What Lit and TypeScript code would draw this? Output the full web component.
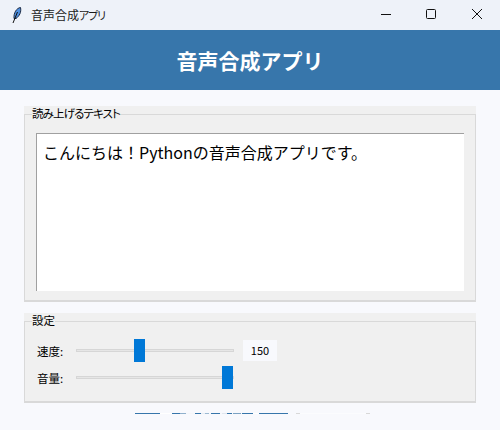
import { LitElement, html, css } from "lit";
import { customElement } from "lit/decorators.js";

@customElement("app-root")
export class AppRoot extends LitElement {
  static styles = css`
    :host {
      display: block;
      width: 500px;
      height: 430px;
      overflow: hidden;
      background: #f8f9fd;
      font-family: "Noto Sans CJK JP", "Noto Sans", sans-serif;
      color: #000;
    }
    .titlebar {
      height: 30px;
      background: #eef2f9;
      display: flex;
      align-items: center;
      padding-left: 8px;
    }
    .feather { width: 16px; height: 18px; margin-right: 7px; flex: none; }
    .title {
      flex: 1;
      color: #1a1a1a;
      font-size: 12px;
      line-height: 14px;
      padding-bottom: 1px;
      font-feature-settings: "palt";
    }
    .kana { font-size: 11px; letter-spacing: -1.2px; }
    .winbtn {
      width: 46px;
      height: 30px;
      box-sizing: border-box;
      padding-bottom: 2px;
      display: flex;
      align-items: center;
      justify-content: center;
    }
    .winbtn svg { width: 12px; height: 12px; }
    .header {
      height: 60px;
      background: #3776ab;
      color: #fff;
      font-size: 21px;
      font-weight: 700;
      display: flex;
      align-items: center;
      justify-content: center;
    }
    .content {
      padding: 16px 24px 0 24px;
      display: flex;
      flex-direction: column;
      gap: 11px;
    }
    .group {
      position: relative;
      background: #f0f0f0;
      height: 196px;
      box-sizing: border-box;
      padding: 27px 12px 0 12px;
    }
    .group.settings { height: 90px; padding: 26px 13px 0 13px; }
    .frame {
      position: absolute;
      inset: 8px 0 0 0;
      border: 1px solid #d9d9d9;
      border-width: 1px 1px 2px 1px;
      box-sizing: border-box;
    }
    .legend {
      position: absolute;
      left: 8px;
      top: 0;
      font-size: 11.5px;
      line-height: 15px;
      background: #f0f0f0;
      font-feature-settings: "palt";
    }
    .legend.tight { letter-spacing: -0.9px; }
    .textarea {
      position: relative;
      width: 428px;
      height: 158px;
      box-sizing: border-box;
      background: #fff;
      border-top: 1px solid #a0a0a0;
      border-left: 1px solid #a0a0a0;
      font-size: 16px;
      line-height: 24px;
      padding: 6px 6px;
    }
    .rows {
      position: relative;
      display: flex;
      flex-direction: column;
      gap: 4px;
    }
    .row {
      display: flex;
      align-items: center;
      height: 23px;
      font-size: 11.5px;
    }
    .label { width: 39px; }
    .track {
      position: relative;
      width: 158px;
      height: 3px;
      background: #e6e6e6;
      box-shadow: inset 0 0 0 1px #d6d6d6;
    }
    .thumb {
      position: absolute;
      top: -10px;
      width: 11px;
      height: 23px;
      background: #0078d7;
    }
    .value {
      margin-left: 9px;
      width: 34px;
      height: 21px;
      background: #f8f9fd;
      font-size: 11px;
      line-height: 21px;
      text-align: center;
    }
    .strip {
      margin-top: 10px;
      padding-left: 135px;
      display: flex;
      height: 1px;
    }
    .seg { height: 1px; }
  `;

  render() {
    const segs: [number, string][] = [
      [25, "#3776ab"],
      [12, "#ffffff"],
      [8, "#3776ab"],
      [6, "#8fb0cc"],
      [9, "#f4f6fa"],
      [6, "#3776ab"],
      [4, "#e8edf4"],
      [4, "#9cbad3"],
      [2, "#f4f6fa"],
      [9, "#3776ab"],
      [2, "#f4f6fa"],
      [5, "#dfe5ee"],
      [5, "#3776ab"],
      [1, "#f4f6fa"],
      [8, "#7ba2c3"],
      [1, "#f4f6fa"],
      [11, "#3776ab"],
      [6, "#ffffff"],
      [29, "#3776ab"],
      [8, "transparent"],
      [4, "#d8d8d8"],
      [66, "#fbfcfe"],
      [4, "#d8d8d8"],
    ];
    return html`
      <div class="titlebar">
        <svg class="feather" viewBox="0 0 16 18">
          <path d="M12.5 1.5 C8.5 2 5.5 7 6 12.5 L8 12.5 C11.5 10 13.5 6 12.5 1.5 Z" fill="#4d8fe0" stroke="#1c2a44" stroke-width="1"></path>
          <path d="M5 17 L9.5 6" stroke="#111" stroke-width="1" fill="none"></path>
        </svg>
        <span class="title">音声合成<span class="kana">アプリ</span></span>
        <div class="winbtn"><svg viewBox="0 0 12 12"><path d="M2 6.5 H12" stroke="#111" stroke-width="1"></path></svg></div>
        <div class="winbtn"><svg viewBox="0 0 12 12"><rect x="1.5" y="1.5" width="9" height="9" rx="1" fill="none" stroke="#111" stroke-width="1"></rect></svg></div>
        <div class="winbtn"><svg viewBox="0 0 12 12"><path d="M1 1 L11 11 M11 1 L1 11" stroke="#111" stroke-width="1"></path></svg></div>
      </div>
      <div class="header">音声合成アプリ</div>
      <div class="content">
        <div class="group">
          <div class="frame"></div>
          <div class="legend tight">読み上げるテキスト</div>
          <div class="textarea">こんにちは！Pythonの音声合成アプリです。</div>
        </div>
        <div class="group settings">
          <div class="frame"></div>
          <div class="legend">設定</div>
          <div class="rows">
            <div class="row">
              <span class="label">速度:</span>
              <div class="track"><div class="thumb" style="left:58px"></div></div>
              <span class="value">150</span>
            </div>
            <div class="row">
              <span class="label">音量:</span>
              <div class="track"><div class="thumb" style="left:146px"></div></div>
            </div>
          </div>
        </div>
      </div>
      <div class="strip">
        ${segs.map(([w, c]) => html`<div class="seg" style="width:${w}px;background:${c}"></div>`)}
      </div>
    `;
  }
}
